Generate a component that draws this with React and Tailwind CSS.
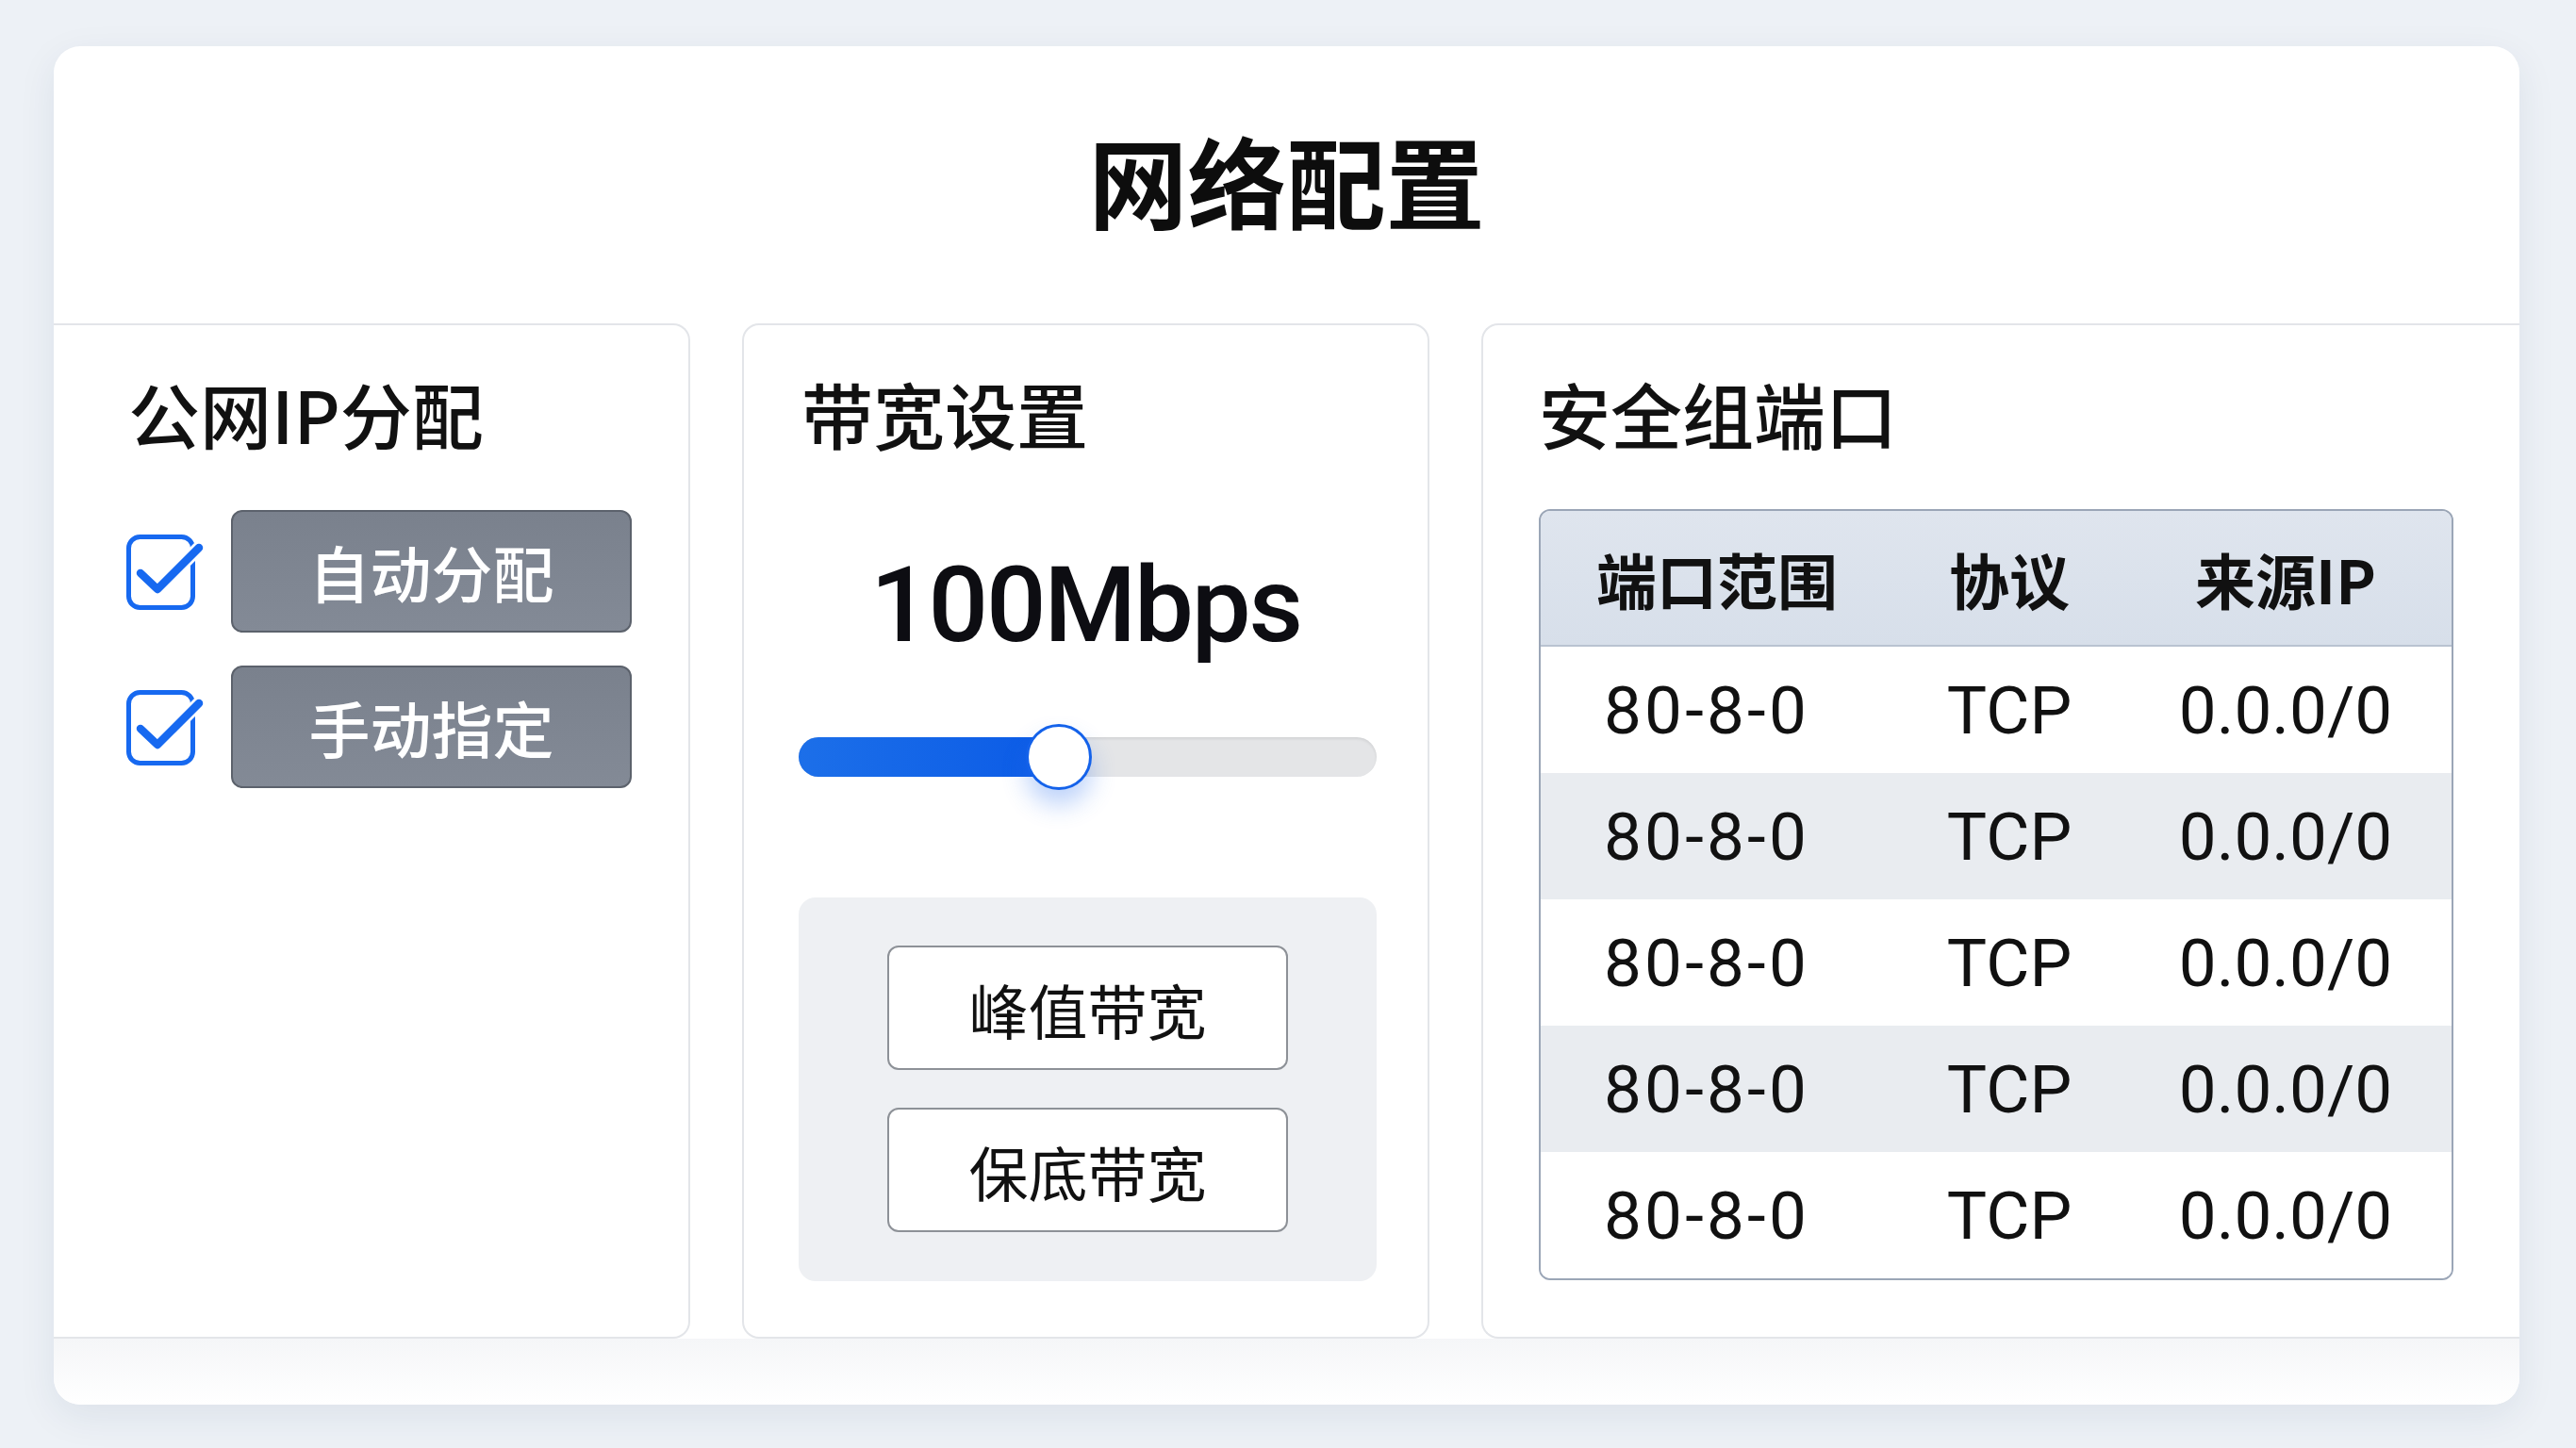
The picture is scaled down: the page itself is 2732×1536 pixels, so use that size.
const cjk = "font-['Noto_Sans_CJK_SC',sans-serif]";

const CheckBox = () => (
  <svg width="84" height="90" viewBox="0 0 84 90" className="shrink-0">
    <rect x="2.5" y="8.5" width="68" height="75" rx="12" fill="#fff" stroke="#1769f0" strokeWidth="5" />
    <path d="M15 47 L33 64 L77 20" fill="none" stroke="#fff" strokeWidth="14" strokeLinecap="butt" strokeLinejoin="round" />
    <path d="M15 47 L33 64 L77 20" fill="none" stroke="#1769f0" strokeWidth="8.5" strokeLinecap="round" strokeLinejoin="round" />
  </svg>
);

const GrayButton = ({ label }) => (
  <div className="flex items-center gap-[27px]">
    <CheckBox />
    <div
      className={`w-[425px] h-[130px] rounded-[12px] border-2 border-[#5c626c] bg-gradient-to-b from-[#7a818d] to-[#838a96] flex items-center justify-center text-white text-[65px] leading-none font-medium ${cjk}`}
    >
      {label}
    </div>
  </div>
);

const OutlineButton = ({ label }) => (
  <div
    className={`w-[425px] h-[132px] rounded-[12px] border-2 border-[#8d9197] bg-white flex items-center justify-center text-[#111] text-[63px] leading-none ${cjk}`}
  >
    {label}
  </div>
);

const rows = [0, 1, 2, 3, 4];

const App = () => {
  return (
    <div className="w-[2732px] h-[1536px] bg-[#edf1f6] pt-[49px] pl-[57px]">
      <div className="w-[2615px] h-[1441px] bg-white rounded-[28px] overflow-hidden shadow-[0_12px_40px_rgba(30,50,90,0.08)] flex flex-col">
        {/* title */}
        <div className="h-[294px] pt-[88px] flex justify-center">
          <h1 className={`text-[105px] leading-none font-bold text-[#0d0d0d] ${cjk}`}>网络配置</h1>
        </div>

        {/* panels */}
        <div className="h-[1077px] flex gap-[55px]">
          {/* 公网IP分配 */}
          <div className="w-[675px] border-2 border-l-0 border-[#e3e5e9] rounded-r-[18px] pl-[79px] pt-[55px]">
            <div className={`text-[76px] leading-none font-medium text-[#111] ${cjk}`}>公网IP分配</div>
            <div className="mt-[65px] ml-[-2px] flex flex-col gap-[35px]">
              <GrayButton label="自动分配" />
              <GrayButton label="手动指定" />
            </div>
          </div>

          {/* 带宽设置 */}
          <div className="w-[729px] border-2 border-[#e3e5e9] rounded-[18px] pt-[55px] flex flex-col">
            <div className={`pl-[61px] text-[76px] leading-none font-medium text-[#111] ${cjk}`}>带宽设置</div>
            <div className="mt-[110px] text-center text-[112px] leading-none font-medium tracking-[-0.02em] text-[#0d0d12] font-['Roboto',sans-serif]">
              100Mbps
            </div>
            <div className="mt-[84px] ml-[58px] relative w-[613px] h-[42px] rounded-full bg-[#e4e5e7] shadow-[inset_0_2px_3px_rgba(0,0,0,0.08)]">
              <div className="absolute left-0 top-0 h-[42px] w-[280px] rounded-l-full bg-gradient-to-r from-[#1c6fe9] to-[#0b5ae6]" />
              <div className="absolute left-[241px] top-[-14px] w-[70px] h-[70px] rounded-full bg-white border-[3px] border-[#1462ea] shadow-[0_16px_26px_rgba(40,110,240,0.3)]" />
            </div>
            <div className="mt-[128px] ml-[58px] w-[613px] h-[407px] rounded-[18px] bg-[#eef0f3] pt-[51px] flex flex-col items-center gap-[40px]">
              <OutlineButton label="峰值带宽" />
              <OutlineButton label="保底带宽" />
            </div>
          </div>

          {/* 安全组端口 */}
          <div className="flex-1 border-2 border-r-0 border-[#e3e5e9] rounded-l-[18px] pl-[59px] pt-[55px]">
            <div className={`text-[76px] leading-none font-medium text-[#111] ${cjk}`}>安全组端口</div>
            <div className="mt-[64px] w-[970px] rounded-[12px] border-2 border-[#9ba6b7] overflow-hidden">
              <div className={`grid grid-cols-[374px_246px_340px] h-[144px] items-center bg-gradient-to-b from-[#dfe5ee] to-[#d7dfea] border-b-2 border-[#b9c3d1] text-[64px] leading-none font-bold text-[#111] ${cjk}`}>
                <div className="text-center">端口范围</div>
                <div className="text-center">协议</div>
                <div className="text-center">来源IP</div>
              </div>
              {rows.map((i) => (
                <div
                  key={i}
                  className={`grid grid-cols-[374px_246px_340px] h-[134px] items-center text-[71px] leading-none text-[#111] font-['Roboto',sans-serif] ${i % 2 === 1 ? "bg-[#e9ecf0]" : "bg-white"}`}
                >
                  <div className="text-center pr-[22px] tracking-[0.045em]">80-8-0</div>
                  <div className="text-center">TCP</div>
                  <div className="text-center">0.0.0/0</div>
                </div>
              ))}
            </div>
          </div>
        </div>

        <div className="flex-1 bg-gradient-to-b from-[#f5f6f8] to-white" />
      </div>
    </div>
  );
};

export default App;
